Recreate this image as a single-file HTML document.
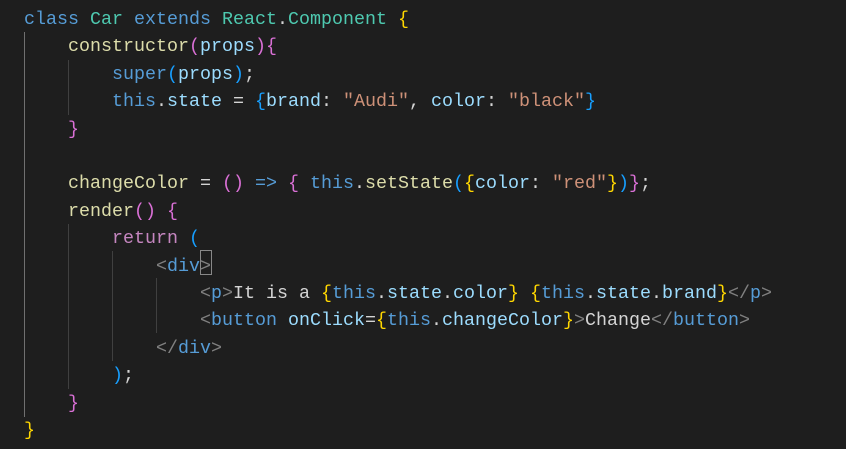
<!DOCTYPE html>
<html><head><style>
html,body{margin:0;padding:0;background:#1e1e1e;width:846px;height:449px;overflow:hidden}
.c{position:absolute;left:24px;top:6px;font-family:"Liberation Mono",monospace;font-size:18.33px;line-height:27.4px;color:#d4d4d4;white-space:pre}
.g{position:absolute;width:1px;background:#404040}
.k{color:#569cd6}.t{color:#4ec9b0}.f{color:#dcdcaa}.v{color:#9cdcfe}.s{color:#ce9178}
.y{color:#ffd700}.p{color:#da70d6}.b{color:#179fff}.r{color:#c586c0}.m{color:#808080}
.box{position:absolute;left:200px;top:250px;width:12px;height:25px;border:1px solid #888;box-sizing:border-box}
</style></head><body>
<div class="g" style="left:24px;top:32px;height:385px;background:#707070"></div>
<div class="g" style="left:68px;top:60px;height:55px"></div>
<div class="g" style="left:68px;top:224px;height:165px"></div>
<div class="g" style="left:112px;top:251px;height:110px"></div>
<div class="g" style="left:156px;top:278px;height:55px"></div>
<div class="box"></div>
<div class="c"><span class="k">class</span> <span class="t">Car</span> <span class="k">extends</span> <span class="t">React</span>.<span class="t">Component</span> <span class="y">{</span>
    <span class="f">constructor</span><span class="p">(</span><span class="v">props</span><span class="p">){</span>
        <span class="k">super</span><span class="b">(</span><span class="v">props</span><span class="b">)</span>;
        <span class="k">this</span>.<span class="v">state</span> = <span class="b">{</span><span class="v">brand</span>: <span class="s">"Audi"</span>, <span class="v">color</span>: <span class="s">"black"</span><span class="b">}</span>
    <span class="p">}</span>

    <span class="f">changeColor</span> = <span class="p">()</span> <span class="k">=&gt;</span> <span class="p">{</span> <span class="k">this</span>.<span class="f">setState</span><span class="b">(</span><span class="y">{</span><span class="v">color</span>: <span class="s">"red"</span><span class="y">}</span><span class="b">)</span><span class="p">}</span>;
    <span class="f">render</span><span class="p">()</span> <span class="p">{</span>
        <span class="r">return</span> <span class="b">(</span>
            <span class="m">&lt;</span><span class="k">div</span><span class="m">&gt;</span>
                <span class="m">&lt;</span><span class="k">p</span><span class="m">&gt;</span>It is a <span class="y">{</span><span class="k">this</span>.<span class="v">state</span>.<span class="v">color</span><span class="y">}</span> <span class="y">{</span><span class="k">this</span>.<span class="v">state</span>.<span class="v">brand</span><span class="y">}</span><span class="m">&lt;/</span><span class="k">p</span><span class="m">&gt;</span>
                <span class="m">&lt;</span><span class="k">button</span> <span class="v">onClick</span>=<span class="y">{</span><span class="k">this</span>.<span class="v">changeColor</span><span class="y">}</span><span class="m">&gt;</span>Change<span class="m">&lt;/</span><span class="k">button</span><span class="m">&gt;</span>
            <span class="m">&lt;/</span><span class="k">div</span><span class="m">&gt;</span>
        <span class="b">)</span>;
    <span class="p">}</span>
<span class="y">}</span></div>
</body></html>
